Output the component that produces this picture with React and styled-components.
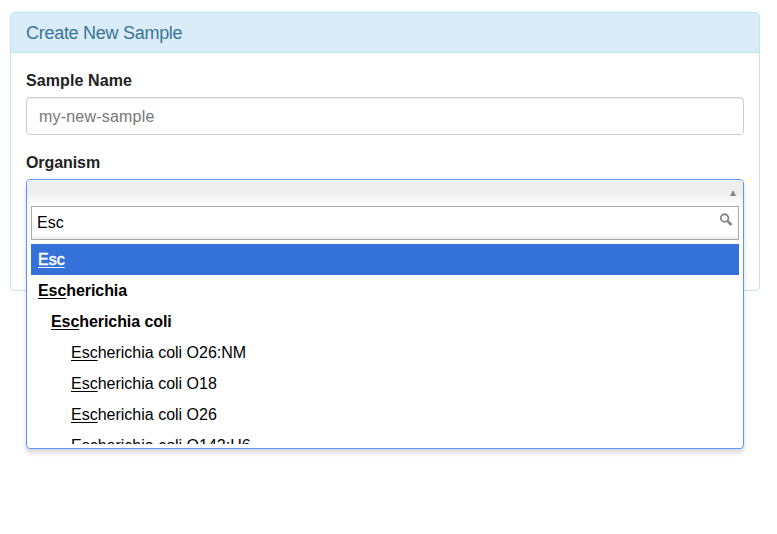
import React from "react";
import styled, { createGlobalStyle } from "styled-components";

const GlobalStyle = createGlobalStyle`
  *, *::before, *::after { box-sizing: border-box; }
  body {
    margin: 0;
    background: #fff;
    color: #222;
    font: 16px/22px "Liberation Sans", Arial, sans-serif;
  }
`;

const Page = styled.main`
  padding: 12px 17px 0 10px;
  height: 534px;
  overflow: hidden;
`;

const Panel = styled.section`
  height: 279px;
  border: 1px solid #bce8f1;
  border-radius: 4px;
  background: #fff;
`;

const PanelHeading = styled.h3`
  margin: 0;
  height: 40px;
  padding: 0 15px;
  border-bottom: 1px solid #bce8f1;
  border-radius: 3px 3px 0 0;
  background: #d9ecf7;
  color: #3a7596;
  font-size: 18px;
  font-weight: 300;
  letter-spacing: -0.28px;
  line-height: 40px;
`;

const PanelBody = styled.form`
  display: flex;
  flex-direction: column;
  gap: 17px;
  padding: 17px 15px;
`;

const Field = styled.div`
  display: flex;
  flex-direction: column;
  gap: 5px;
`;

const Label = styled.label`
  height: 22px;
  font-weight: 700;
  letter-spacing: ${(p) => p.$tracking || "0"};
`;

const TextInput = styled.input`
  height: 38px;
  padding: 7px 12px 5px;
  border: 1px solid #ccc;
  border-radius: 4px;
  background: #fff;
  color: #555;
  font: inherit;
  letter-spacing: 0.2px;
  outline: none;
  box-shadow: inset 0 1px 1px rgba(0, 0, 0, 0.075);
  &::placeholder { color: #777; opacity: 1; }
`;

const Select = styled.div`
  position: relative;
  height: 38px;
`;

const Dropdown = styled.div`
  position: absolute;
  top: 0;
  left: 0;
  right: 0;
  height: 270px;
  border: 1px solid #5897fb;
  border-radius: 4px;
  background: #fff;
  box-shadow: 0 4px 5px rgba(0, 0, 0, 0.15);
`;

const Choice = styled.div`
  display: flex;
  justify-content: flex-end;
  align-items: center;
  height: 26px;
  padding: 1px 7px 0 0;
  border-radius: 3px 3px 0 0;
  background: linear-gradient(#fff 0, #eee 1px, #eee 13px, #fff 26px);
`;

const SearchBox = styled.div`
  display: flex;
  align-items: flex-start;
  height: 34px;
  margin: 0 4px 4px;
  padding-right: 5px;
  border: 1px solid #aaa;
  background: linear-gradient(#fff 85%, #eee 99%);
`;

const SearchInput = styled.input`
  flex: 1;
  height: 32px;
  padding: 0 5px;
  border: 0;
  background: transparent;
  color: #000;
  font: inherit;
  outline: none;
`;

const SearchIcon = styled.svg`
  margin-top: 6px;
`;

const Results = styled.ul`
  height: 200px;
  margin: 0 4px;
  padding: 0;
  overflow: hidden;
  list-style: none;
  color: #000;
`;

const indents = [7, 20, 40];

const Result = styled.li`
  height: 31px;
  padding-left: ${(p) => indents[p.$level]}px;
  line-height: 31px;
  font-weight: ${(p) => (p.$bold ? 700 : 400)};
  letter-spacing: ${(p) => (p.$bold ? "-0.07px" : "0")};
  color: ${(p) => (p.$active ? "#fff" : "#000")};
  background: ${(p) => (p.$active ? "#3472d9" : "transparent")};
  -webkit-text-stroke: ${(p) => (p.$active ? "0.5px #fff" : "0")};
`;

const Match = styled.span`
  text-decoration: underline;
  text-decoration-thickness: 1px;
  text-underline-offset: 2px;
  text-decoration-skip-ink: none;
`;

const results = [
  { rest: "", level: 0, active: true },
  { rest: "herichia", level: 0, bold: true },
  { rest: "herichia coli", level: 1, bold: true },
  { rest: "herichia coli O26:NM", level: 2 },
  { rest: "herichia coli O18", level: 2 },
  { rest: "herichia coli O26", level: 2 },
  { rest: "herichia coli O142:H6", level: 2 },
];

export default function App() {
  return (
    <Page>
      <GlobalStyle />
      <Panel>
        <PanelHeading>Create New Sample</PanelHeading>
        <PanelBody>
          <Field>
            <Label htmlFor="sample" $tracking="0.1px">Sample Name</Label>
            <TextInput id="sample" placeholder="my-new-sample" />
          </Field>
          <Field>
            <Label htmlFor="organism" $tracking="-0.08px">Organism</Label>
            <Select>
              <Dropdown>
                <Choice>
                  <svg width="6" height="5" viewBox="0 0 6 5">
                    <path d="M2.4 0h1.2L6 5H0Z" fill="#888" />
                  </svg>
                </Choice>
                <SearchBox>
                  <SearchInput id="organism" defaultValue="Esc" />
                  <SearchIcon width="14" height="14" viewBox="0 0 14 14" fill="none" stroke="#888">
                    <circle cx="5.6" cy="5" r="3.8" strokeWidth="1.9" />
                    <path d="M8.3 7.8L12.6 12" strokeWidth="2.5" />
                  </SearchIcon>
                </SearchBox>
                <Results>
                  {results.map((r, i) => (
                    <Result key={i} $level={r.level} $active={r.active} $bold={r.bold}>
                      <Match>Esc</Match>
                      {r.rest}
                    </Result>
                  ))}
                </Results>
              </Dropdown>
            </Select>
          </Field>
        </PanelBody>
      </Panel>
    </Page>
  );
}
